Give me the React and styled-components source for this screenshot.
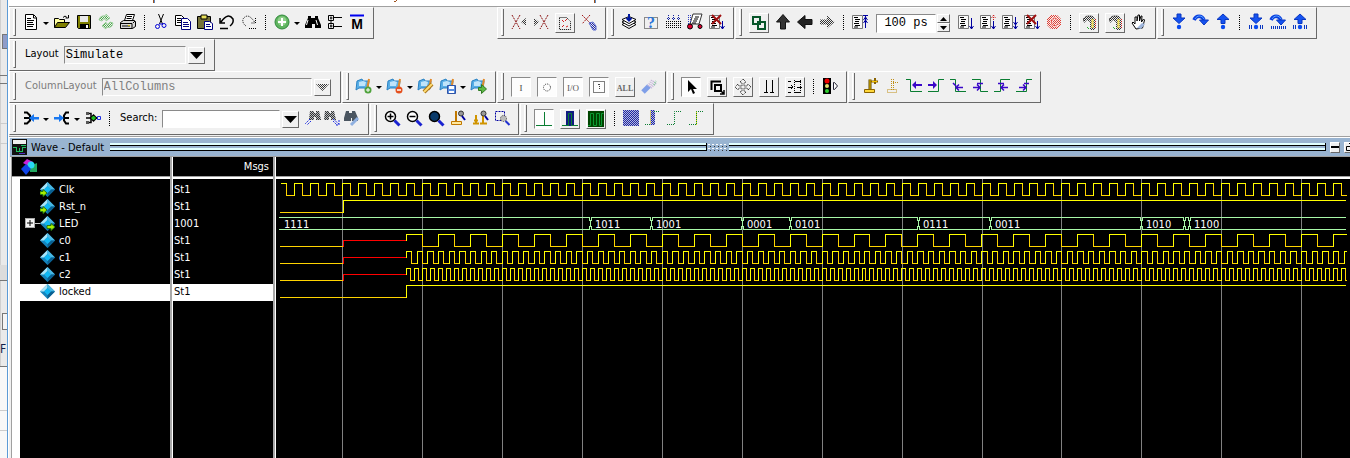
import React, { useState } from 'react';
import styled, { createGlobalStyle, css } from 'styled-components';

const GlobalStyle = createGlobalStyle`
  * {
    box-sizing: border-box;
  }
  body {
    margin: 0;
    overflow: hidden;
    background: #f0f0f0;
    color: #000;
    font-family: 'DejaVu Sans Condensed', 'DejaVu Sans', sans-serif;
    font-size: 11px;
  }
`;

const Page = styled.div`
  display: flex;
  height: 100vh;
`;

// The sliver of the window behind this one
const Behind = styled.aside`
  flex: 0 0 8px;
  display: flex;
  flex-direction: column;
  overflow: hidden;
  background: linear-gradient(90deg, #d0d0d0 0 1px, #eaeaea 1px 7px, #5c9bd6 7px);
`;

const BehindPart = styled.div`
  flex: 0 0 ${(p) => p.$h}px;
  width: 7px;
  overflow: hidden;
  line-height: 16px;
  font-size: 12px;
  color: #10204a;
  background: ${(p) => p.$bg || 'transparent'};
  border-bottom: 1px solid ${(p) => p.$line || 'transparent'};
`;

const BehindField = styled(BehindPart)`
  width: 5px;
  margin-left: 2px;
  border: 1px solid #777;
  border-right: 0;
`;

const Main = styled.main`
  flex: 1;
  min-width: 0;
  display: flex;
  flex-direction: column;
  border-left: 1px solid #fff;
`;

const TopEdge = styled.div`
  flex: 0 0 7px;
  display: flex;
  background: #fff;
  border-bottom: 1px solid #a0a0a0;
`;

const Toolbars = styled.div`
  padding-bottom: 1px;
  border-bottom: 1px solid #a0a0a0;
`;

const ToolRow = styled.div`
  display: flex;
  gap: 1px;
  height: 32px;
`;

const Spacer = styled.div`
  flex: 0 0 121px;
`;

const Group = styled.div`
  display: flex;
  align-items: center;
  flex: none;
  padding-right: 5px;
  border: 1px solid #fff;
  border-right-color: #696969;
  border-bottom-color: #696969;

  &::before {
    content: '';
    align-self: stretch;
    width: 1px;
    margin: 1px 4px 2px 3px;
    border-left: 1px solid #fff;
    border-right: 1px solid #696969;
    border-bottom: 1px solid #696969;
  }
`;

const ToolButton = styled.button`
  display: flex;
  align-items: center;
  justify-content: center;
  width: ${(p) => (p.$narrow ? 19 : 22)}px;
  height: 22px;
  padding: 0 0 2px;
  border: 0;
  background: none;

  ${(p) =>
    p.$boxed &&
    css`
      width: 20px;
      height: 20px;
      margin: 0 3px;
      padding: 0;
      border: 1px solid #fff;
      border-right-color: #696969;
      border-bottom-color: #696969;
    `}

  ${(p) =>
    p.$pressed &&
    css`
      background: #fdfdfd;
      border-color: #8a8a8a #fff #fff #8a8a8a;
    `}
`;

const IconSvg = styled.svg`
  flex: none;
  overflow: visible;
`;

const MenuArrow = styled.button`
  width: 9px;
  height: 22px;
  padding: 0;
  border: 0;
  background: none;

  &::after {
    content: '';
    display: block;
    width: 0;
    margin: 0 1px;
    border: 3px solid transparent;
    border-top-color: #000;
    border-bottom: 0;
  }
`;

const Divider = styled.span`
  height: 15px;
  margin: 0 5px 2px;
  border-left: 1px dotted #000;
`;

const FieldLabel = styled.label`
  padding: 0 5px 3px;
  color: ${(p) => (p.$dim ? '#7c7c7c' : '#000')};
`;

const fieldLook = css`
  height: 18px;
  padding: 0 1px;
  border: 1px solid #fff;
  border-top-color: #8a8a8a;
  border-left-color: #8a8a8a;
  border-radius: 0;
  outline: 0;
  font-family: 'Liberation Mono', monospace;
  font-size: 12px;
`;

const LayoutSelect = styled.select`
  ${fieldLook}
  appearance: none;
  width: ${(p) => (p.$wide ? 210 : 122)}px;
  background: #f0f0f0;
  color: #000;
  opacity: 1;

  &:disabled {
    color: #808080;
  }
`;

const SearchInput = styled.input`
  ${fieldLook}
  width: 118px;
  background: #fff;
`;

const TimeInput = styled.input`
  ${fieldLook}
  width: 60px;
  height: 19px;
  margin-left: 5px;
  text-align: center;
  background: #fff;
`;

const Spinner = styled.div`
  display: flex;
  flex-direction: column;
  margin: 0 5px 0 1px;
`;

const SpinButton = styled.button`
  display: flex;
  align-items: center;
  justify-content: center;
  width: 13px;
  height: 9px;
  padding: 0;
  background: #f0f0f0;
  border: 1px solid #fff;
  border-right-color: #696969;
  border-bottom-color: #696969;
`;

const DropButton = styled.button`
  display: flex;
  align-items: center;
  justify-content: center;
  width: 17px;
  height: 17px;
  margin: 0 4px 0 2px;
  padding: 0;
  background: #f0f0f0;
  border: 1px solid #fff;
  border-right-color: #696969;
  border-bottom-color: #696969;
`;

const WaveWindow = styled.section`
  flex: 1;
  min-height: 0;
  display: flex;
  flex-direction: column;
  padding-left: 1px;
  border-top: 1px solid #fff;
`;

const TitleBar = styled.header`
  flex: 0 0 19px;
  display: flex;
  align-items: center;
  padding-left: 2px;
  overflow: hidden;
  background: #99b4d1;
  border-bottom: 1px solid #a0a0a0;
`;

const Title = styled.h1`
  margin: 0 6px 0 4px;
  font-size: 11px;
  font-weight: normal;
  white-space: nowrap;
`;

const Grooves = styled.div`
  flex: 1;
  height: 8px;
  border: solid #000;
  border-width: 0 1px 1px 0;
  background: linear-gradient(#e0ffff 0 2px, #000 2px 3px, transparent 3px 5px, #e0ffff 5px 7px);
`;

const Grip = styled.svg`
  flex: none;
  margin: 0 1px;
`;

const WindowButton = styled.button`
  flex: none;
  display: flex;
  align-items: center;
  justify-content: center;
  width: 10px;
  height: 11px;
  margin-left: 4px;
  padding: 0;
  background: #f0f0f0;
  border: 1px solid #fff;
  border-right-color: #696969;
  border-bottom-color: #696969;

  &:last-child {
    margin-right: -4px;
  }
`;

const Panes = styled.div`
  flex: 1;
  min-height: 0;
  display: flex;
  margin-left: 1px;
  background: #fff;
  border-left: 1px solid #a0a0a0;
`;

const Pane = styled.div`
  flex: 0 0 ${(p) => p.$w}px;
  display: flex;
  flex-direction: column;
  padding-right: 2px;
  background: #a8a8a8;
  border-right: 1px solid #fff;
`;

const WavePane = styled.div`
  flex: 1;
  min-width: 0;
  display: flex;
  flex-direction: column;
`;

const PaneHead = styled.div`
  flex: 0 0 20px;
  display: flex;
  align-items: center;
  justify-content: ${(p) => (p.$right ? 'flex-end' : 'flex-start')};
  padding: 0 4px 0 8px;
  background: #000;
  color: #fff;
  border-bottom: 1px solid #a0a0a0;
`;

const PaneBody = styled.ul`
  flex: 1;
  margin: 0;
  padding: 3px 0 0;
  list-style: none;
  background: #000;
  border: solid #fff;
  border-width: 2px 0 0 ${(p) => (p.$gutter ? 8 : 0)}px;
`;

const SignalRow = styled.li`
  display: flex;
  align-items: center;
  height: 17px;
  padding: 0 0 3px ${(p) => (p.$value ? 1 : 5)}px;
  white-space: pre;
  color: ${(p) => (p.$selected ? '#000' : '#fff')};
  background: ${(p) => (p.$selected ? '#fff' : '#000')};
`;

const Expander = styled.button`
  display: flex;
  width: 10px;
  height: 10px;
  padding: 0;
  background: #f4f4f4;
  border: 1px solid #aaa;
`;

const Branch = styled.span`
  flex: 0 0 ${(p) => (p.$line ? 5 : 15)}px;
  border-top: ${(p) => (p.$line ? '1px solid #ccc' : '0')};
`;

const SignalName = styled.span`
  padding-left: 4px;
`;

const WaveArea = styled.div`
  flex: 1;
  min-height: 0;
  margin-top: 2px;
  overflow: hidden;
  background: #000;
`;

const WaveSvg = styled.svg`
  display: block;
  width: 100%;
  height: 100%;
`;

/* ---------- icons ---------- */

const S = ({ d, c = '#000', w = 1, dash }) => (
  <path d={d} fill="none" stroke={c} strokeWidth={w} strokeDasharray={dash} />
);
const F = ({ d, c = '#000', s }) => <path d={d} fill={c} stroke={s} />;
const T = ({ children, x = 8, y = 12, size = 9, c = '#000', weight, family = 'Liberation Serif, serif' }) => (
  <text x={x} y={y} fontSize={size} fill={c} fontWeight={weight} textAnchor="middle" fontFamily={family}>
    {children}
  </text>
);

const GREEN = '#0a7d32';
const NAVY = '#0000a0';
const VIOLET = '#3a08c8';

const textPage = (
  <>
    <F d="M.5 1.5h10v13h-10z" c="#f8f8f8" s="#777" />
    <S d="M2 3.5h4M3 5.5h5M3 7.5h4M2 9.5h5M3 11.5h5M2 13h4" w={1} />
  </>
);
const redX = <S d="M3 1l9 9M12 1l-9 9" c="#a01010" w={2} />;
const banner = (
  <>
    <F d="M1 3l5-2 1 2h6l-1 8-4-1H3L0 12z" c="#58aee6" s="#2a82c4" />
    <F d="M3 4l4-1 3 1-1 4H3z" c="#bfe4fa" />
    <S d="M13 1l-2 11" c="#e08a2c" w={2} />
  </>
);
const pin = (
  <>
    <S d="M8 1.5v10" c="#5a4600" w={3} />
    <S d="M8 1.5v10" c="#f5c400" w={1} />
    <F d="M2.5 11.5h10v3h-10z" c="#ffd83a" s="#8a6200" />
  </>
);
const lens = (fill) => (
  <>
    <circle cx="6.500" cy="6.500" r="5" fill={fill} stroke="#000" strokeWidth="1.500" />
    <S d="M10.500 10.500l5 5" c="#1a22d0" w={3} />
  </>
);
const binoculars = (fill) => (
  <>
    <F d="M3 2h3v2h4V2h3v2l3 7v3h-6v-4H7v4H0v-3l3-7z" c={fill} />
    <S d="M3 6l-1.500 5M11 6l1.500 5" c="#fff" />
  </>
);
const blueDown = <F d="M6 0h4v4h4L8 9.500 2 4h4z" c="#1553f0" s="#0a37c0" />;
const blueUp = <F d="M6 9.500h4v-4h4L8 0 2 5.500h4z" c="#1553f0" s="#0a37c0" />;
const blueOver = (
  <>
    <path d="M1 6c2-5 8-5 10 0" fill="none" stroke="#0a3ee0" strokeWidth="3.500" />
    <path d="M2 5c2-4 7-4 9 0" fill="none" stroke="#5aa8ff" strokeWidth="1" />
    <F d="M6.500 6h9L11 11z" c="#1553f0" s="#0a37c0" />
  </>
);
const processBars = <S d="M1.500 11v4M3.500 11v4M12.500 11v4M14.500 11v4" c="#0a37c0" />;
const dot = <circle cx="8" cy="13" r="2.200" fill="#0a4bf0" />;
const hatchPage = (
  <>
    <F d="M2 4l4-3h6l2 3v11H9V7L6 5 3 8z" c="url(#stipple)" />
    <S d="M3 6V3l3-2h5" dash="1 1" />
    <S d="M11.500 4v9" c="#f0e060" w={2} />
    <S d="M14.500 4v10" c="#d02020" dash="1 1" />
    <S d="M6 12l2 2" c="#2ab030" />
  </>
);
const dashedPage = <S d="M2.500 2.500h7l4 4v8h-11z" dash="1 1" />;

const icons = {
  file: (
    <>
      <F d="M2.500 .5h8l3 3v12h-11z" c="#fff" s="#000" />
      <S d="M10.500 1v3h3M4 4.500h4M4 6.500h7M4 8.500h6M4 10.500h7M4 12.500h6" />
    </>
  ),
  open: (
    <>
      <F d="M.5 13.500v-9h4l1 1h5v3" c="#ffffa0" s="#000" />
      <F d="M.5 13.500l3-5h12l-4 5z" c="#808000" s="#000" />
      <S d="M9 3.500q2-3 4 0M14.500 1v3h-3" />
    </>
  ),
  save: (
    <>
      <F d="M1.500 1.500h13v13h-12l-1-1z" c="#808000" s="#000" />
      <F d="M4 2h8v6H4z" c="#e8e8e8" />
      <F d="M4 10h9v5H4z" />
      <F d="M10 11h2v3h-2z" c="#fff" />
    </>
  ),
  reload: (
    <>
      <F d="M1 6q1-5 7-4V0l4 4-4 3V5Q5 4 4 7z" c="url(#stippleGreen)" s="#9ccf9c" />
      <F d="M15 9q-1 6-7 4v2l-4-3 4-4v2q3 1 4-2z" c="url(#stippleGreen)" s="#9ccf9c" />
    </>
  ),
  print: (
    <>
      <F d="M4.500 6.500l2-6h8l-2 6" c="#fff" s="#000" />
      <S d="M7 2.500h5M6.500 4.500h5" />
      <F d="M.5 8.500l3-2h11l1 1v5l-3 2H.5z" c="#d8d8d8" s="#000" />
      <S d="M1 9.500h11v5M2 12h8M13 9l2-2" />
      <S d="M8 11.500h2" c="#c8b800" />
    </>
  ),
  cut: (
    <>
      <S d="M5.500 0l4 10M10.500 0l-4 10" />
      <circle cx="4.500" cy="12.500" r="2" fill="none" stroke="#0000d8" />
      <circle cx="11" cy="11.500" r="2" fill="none" stroke="#0000d8" />
      <S d="M6 10h4" c="#0000d8" />
    </>
  ),
  copy: (
    <>
      <F d="M.5 1.500h6l3 3v7h-9z" c="#fff" s="#000" />
      <S d="M2 4.500h4M2 6.500h5M2 8.500h5" />
      <F d="M6.500 4.500h6l3 3v8h-9z" c="#fff" s="#000080" />
      <S d="M8 8.500h5M8 10.500h6M8 12.500h6" c="#000080" />
    </>
  ),
  paste: (
    <>
      <F d="M.5 2.500h13v12H.5z" c="#77733a" s="#000" />
      <F d="M4 1h6v4H4z" c="#e8e05a" s="#000" />
      <F d="M7.500 7.500h5l3 2v6h-8z" c="#fff" s="#000080" />
      <S d="M9 10.500h4M9 12.500h5" c="#000080" />
    </>
  ),
  undo: <S d="M1 4v5h5M2 8q7-10 12-3 1 4-3 7M1 14.500h8" w={1.5} />,
  redo: <S d="M14.500 4v5h-5M13.500 8Q7-2 2 5q-1 4 3 7M8 14.500h7" dash="1 1" />,
  add: (
    <>
      <circle cx="8" cy="8" r="7" fill="#5fb35f" stroke="#2f8a3a" />
      <circle cx="8" cy="7" r="4.500" fill="#8fd08a" />
      <S d="M8 4v8M4 8h8" c="#fff" w={2} />
    </>
  ),
  find: binoculars('#000'),
  tree: (
    <S d="M1.500 1.500h5v5h-5zM1.500 9.500h5v5h-5zM4 2.500v3M3 4h2.500M4 10.500v3M3 12h2.500M7 3.500h8M7 12.500h8M4 7v2" />
  ),
  modelM: (
    <>
      <S d="M1 1.500h14" c="#0000f0" w={2} />
      <T y={15} size={14} weight="bold" family="Liberation Sans, sans-serif">M</T>
    </>
  ),
  xLeft: (
    <>
      <S d="M1 1l8 14M9 1L1 15" c="#8a1010" dash="2 1" />
      <F d="M15 4v8l-5-4z" c="url(#stipple)" />
    </>
  ),
  xRight: (
    <>
      <S d="M7 1l8 14M15 1L7 15" c="#8a1010" dash="2 1" />
      <F d="M1 4v8l5-4z" c="url(#stipple)" />
    </>
  ),
  coverPage: (
    <>
      {dashedPage}
      <S d="M5 5l2 2M8 6l2-2M5 12l2-2M9 12l2-1" c="#d02020" />
    </>
  ),
  xBrush: (
    <>
      <S d="M1 1l9 9M9 1L1 10" c="#a01818" dash="2 1" />
      <F d="M8 9l4-1 3 4v4h-3z" c="url(#stippleBlue)" s="#5a6ad0" />
    </>
  ),
  stack: (
    <>
      <F d="M1 10.500l7-4 7 4-7 4z" c="#fff" s="#000" />
      <F d="M1 8l7-4 7 4-7 4z" c="#fff" s="#000" />
      <F d="M1 5.500l7-3 7 3-7 4z" c="#fff" s="#000" />
      <S d="M8 0v6M5.500 4L8 6.500 10.500 4" c="#0018a0" w={2} />
    </>
  ),
  question: (
    <>
      <S d="M1.500 3.500h13v11h-13z" c="#222" dash="1 1" />
      <T y={14} size={16} weight="bold" c="#2a74d8">?</T>
    </>
  ),
  grid: (
    <>
      <S d="M1 9.500h15M1 11.500h15M1 13.500h15M1 7.500h15" dash="1 1" />
      <S d="M3.500 1v5M8.500 1v5M13.500 1v5M2 4.500h3M7 4.500h3M12 4.500h3" c="#1020a0" dash="1 1" />
    </>
  ),
  cart: (
    <>
      <F d="M6 0h9l-3 10H3z" c="#fff" s="#333" />
      <S d="M8 3h4M7 5h4M6 7h4M5 9h4" />
      <S d="M1.500 1v9M3.500 1v8" c="#3040c0" dash="1 1" />
      <circle cx="3" cy="12.500" r="2.500" fill="#e00030" stroke="#000" />
      <circle cx="13" cy="12.500" r="2" fill="#e00030" stroke="#000" />
    </>
  ),
  pageX: (
    <>
      {textPage}
      <S d="M13.500 7v8M11.500 12l2 3 2-3" c={NAVY} />
      {redX}
    </>
  ),
  link: <S d="M2 2h7v7H2zM7 7h7v7H7z" c="#07562a" w={2} />,
  up: <F d="M5.500 15V8h-4L8 .5 14.500 8h-4v7z" c="#333" s="#111" />,
  left: <F d="M15 5.500H8v-4L.5 8 8 14.500v-4h7z" c="#222" s="#111" />,
  rightDim: <F d="M1 5.500h7v-4L15.500 8 8 14.500v-4H1z" c="url(#stipple)" />,
  pageUp: (
    <>
      {textPage}
      <S d="M13.500 2v12M11 1.500h5M11.500 6l2-3 2 3M11.500 9l2-3 2 3" c={NAVY} />
    </>
  ),
  pageDown: (
    <>
      {textPage}
      <S d="M13.500 4v11M11.500 12l2 3 2-3" c={NAVY} />
    </>
  ),
  pageBoth: (
    <>
      {textPage}
      <S d="M13.500 7v8M11.500 12l2 3 2-3" c={NAVY} />
      <S d="M13.500 1v6M11.500 4l2-3 2 3" c="#d02020" dash="1 1" />
    </>
  ),
  pageDouble: (
    <>
      {textPage}
      <S d="M13.500 3v12M11.500 8l2 3 2-3M11.500 12l2 3 2-3" c={NAVY} />
    </>
  ),
  stop: (
    <>
      <F d="M5 1h6l4 4v6l-4 4H5l-4-4V5z" c="url(#stippleRed)" />
      <S d="M12 6Q8 2 5.500 6q-1 3 1 5 3 2 5.500-1" c="#fff" w={2} />
      <S d="M12 6Q8 2 5.500 6q-1 3 1 5 3 2 5.500-1" c="#e23a30" />
    </>
  ),
  hatchPage,
  hand: (
    <>
      <F d="M5 15l-4-6 1-1 2 2V3h2v4l1-6h1.500v6l1.500-5h1l-.5 6 2-3 1 1-2 8z" c="#fff" s="#000" />
      <F d="M6 14l5-5 3 1-4 5z" c="#9fb6dc" />
    </>
  ),
  stepIn: <>{blueDown}{dot}</>,
  stepOver: blueOver,
  stepOut: <>{blueUp}{dot}</>,
  stepInP: <>{blueDown}{dot}{processBars}</>,
  stepOverP: (
    <>
      {blueOver}
      <S d="M1 13.500h15" c="#0a37c0" w={3} dash="1 1" />
    </>
  ),
  stepOutP: <>{blueUp}{dot}{processBars}</>,
  flagAdd: (
    <>
      {banner}
      <circle cx="12" cy="12" r="3.500" fill="#4fa33c" />
      <S d="M12 10v4M10 12h4" c="#fff" />
    </>
  ),
  flagDel: (
    <>
      {banner}
      <circle cx="12" cy="12" r="3.500" fill="#e4501e" />
      <S d="M10 12h4" c="#fff" w={1.5} />
    </>
  ),
  flagEdit: (
    <>
      {banner}
      <S d="M6 14l8-8" c="#a8741c" w={4} />
      <S d="M6 14l8-8" c="#ffdc6e" w={2} />
    </>
  ),
  flagSave: (
    <>
      {banner}
      <F d="M7.500 7.500h8v8h-8z" c="#5b8fe0" s="#2f55a8" />
      <F d="M9 8h5v3H9zM9 13h5v2H9z" c="#fff" />
    </>
  ),
  flagGo: (
    <>
      {banner}
      <F d="M7.500 9.500h3v-3l5 4.500-5 4.500v-3h-3z" c="#5fb944" s="#2f7a22" />
    </>
  ),
  fI: <T c="#444">I</T>,
  fO: <circle cx="8" cy="8.500" r="3.500" fill="none" stroke="#333" strokeDasharray="1 1" />,
  fIO: <T size={9} c="#555">I/O</T>,
  fBox: (
    <>
      <S d="M2.500 2.500h11v11h-11z" dash="1 1" />
      <S d="M8.500 5v6M7 5.500h2" c="#444" dash="1 1" />
    </>
  ),
  fAll: <T size={8} weight="bold" c="#666">ALL</T>,
  brush: (
    <>
      <S d="M2 14l6-6" c="#7f9fe8" w={5} />
      <S d="M7 8l4-6M9 9l4-6M10 10l5-5" c="#c8b8dc" w={2} dash="1 1" />
      <S d="M13 7l2-4" c="#88c8a0" w={2} dash="1 1" />
    </>
  ),
  cursor: <F d="M5 1v12l3-3 2 5 2-1-2-4h4z" />,
  region: (
    <>
      <S d="M2.500 11V2.500H12" w={2} />
      <S d="M6 6h6v6H6z" w={2} />
      <S d="M11 11l4 4M15 11v4h-4" w={1.5} />
    </>
  ),
  pan: <S d="M8 0l3 3-2 1v3h3l1-2 3 3-3 3-1-2H9v3l2 1-3 3-3-3 2-1V9H4l-1 2-3-3 3-3 1 2h3V4L5 3z" dash="1 1" />,
  bars: <S d="M5.500 1v12M11.500 1v12M3 13.500h4M9 13.500h4" />,
  ranges: (
    <>
      <S d="M1 2.500h3M1 8.500h4M1 13.500h3M4 6l2 2-2 2M8 2.500h6M8 13.500h6M10 8.500h5" />
      <S d="M7.500 1v14M13.500 1v14" dash="1 1" />
    </>
  ),
  light: (
    <>
      <F d="M1 0h8v16H1z" />
      <circle cx="5" cy="3" r="2.500" fill="#f00000" />
      <circle cx="5" cy="8" r="2" fill="#e8e070" />
      <circle cx="5" cy="13" r="2" fill="#30d030" />
      <F d="M11.500 4.500h1l3 3.500-3 3.500h-1z" c="#fff" s="#223" />
    </>
  ),
  pinAdd: (
    <>
      {pin}
      <S d="M9 3.500h7M13 0v6" c="#8a6200" w={2} />
      <S d="M10 3.500h5" c="#f5c400" />
    </>
  ),
  pinDim: <S d="M7.500 1v11M9.500 1v11M3.500 11.500h9v3h-9zM9 4.500h6" c="#c09018" dash="1 1" />,
  edgeL: (
    <>
      <S d="M0 1.500h4.500v12H16" c={GREEN} />
      <F d="M6 7l4-4v3h6v2h-6v3z" c={VIOLET} />
    </>
  ),
  edgeR: (
    <>
      <S d="M0 13.500h10.500v-12H16" c={GREEN} />
      <F d="M9 7L5 3v3H0v2h5v3z" c={VIOLET} />
    </>
  ),
  fallL: (
    <>
      <S d="M0 1.500h5.500v12H16" c={GREEN} />
      <S d="M6 9.500h7M9 6.500l-3 3 3 3M3 5l3 3" c={VIOLET} w={1.5} />
    </>
  ),
  fallR: (
    <>
      <S d="M0 1.500h8.500v12H16" c={GREEN} />
      <S d="M1 9.500h7M5 6.500l3 3-3 3M5 5.500h6" c={VIOLET} w={1.5} />
    </>
  ),
  riseL: (
    <>
      <S d="M0 13.500h6.500v-12H16" c={GREEN} />
      <S d="M7 9.500h7M10 6.500l-3 3 3 3M4 5.500h6" c={VIOLET} w={1.5} />
    </>
  ),
  riseR: (
    <>
      <S d="M0 13.500h10.500v-12H16" c={GREEN} />
      <S d="M3 9.500h7M7 6.500l3 3-3 3M8 5.500h5" c={VIOLET} w={1.5} />
    </>
  ),
  mergeIn: (
    <>
      <S d="M1 2.500h3l3 3v5l-3 3H1M1 8h5" w={2} />
      <F d="M6 8l5-4v3h5v2.500h-5V12z" c="#1a78f0" />
    </>
  ),
  mergeOut: (
    <>
      <S d="M15 2.500h-3l-2 3v5l2 3h3M15 8h-5" w={2} />
      <F d="M10 8L5 4v3H0v2.500h5V12z" c="#1a78f0" />
    </>
  ),
  net: (
    <>
      <S d="M1 3.500h5v9H1M1 8h12" w={1.5} />
      <F d="M1 2h3v3H1zM1 11h3v3H1z" c="#555" />
      <F d="M8.500 4l4 4-4 4-4-4z" c="#000" />
      <S d="M8.500 6v4M6.500 8h4" c="#20c020" w={2} />
      <S d="M12.500 6.500h3v3h-3z" c="#2030e0" />
    </>
  ),
  findPrev: (
    <>
      <F d="M5 1h4v2h2V1h3l2 9h-5V7H9v3H4z" c="#b8bcc0" />
      <F d="M5 1h4v2h2V1h3l2 9h-5V7H9v3H4z" c="url(#stipple)" />
      <S d="M5 9l-5 5M6 11l-4 4" c="#2030e0" dash="2 1" />
    </>
  ),
  findNext: (
    <>
      <F d="M1 1h4v2h2V1h3l2 9H7V7H5v3H0z" c="#b8bcc0" />
      <F d="M1 1h4v2h2V1h3l2 9H7V7H5v3H0z" c="url(#stipple)" />
      <S d="M9 9l6 5M9 11l4 4M15 10v5h-4" c="#2030e0" dash="2 1" />
    </>
  ),
  findOpts: (
    <>
      <F d="M2 1h3v2h3V1h3l3 7v3H8V8H7v3H0V8z" c="#4a5560" />
      <S d="M7 15l7-7" c="#8fb0e0" w={3} />
    </>
  ),
  zoomIn: <>{lens('#fff')}<S d="M6.500 3.500v6M3.500 6.500h6" w={1.5} /></>,
  zoomOut: <>{lens('#fff')}<S d="M3.500 6.500h6" w={1.5} /></>,
  zoomFull: lens('#0a3a6a'),
  zoomPin: (
    <>
      <S d="M6 1v10" c="#c07800" w={2} />
      <F d="M1.500 11.500h10v3h-10z" c="#ffe9a0" s="#c07800" />
      <circle cx="11" cy="3.500" r="2.500" fill="#999" stroke="#333" />
      <S d="M12 6l3 4" c={NAVY} w={2} />
    </>
  ),
  zoomPins: (
    <>
      <S d="M4 5v8M1 13.500h6M11 5v8M8 13.500h7M2 10.500h4" c="#d09400" w={2} />
      <circle cx="11.500" cy="3.500" r="2.500" fill="#999" stroke="#333" />
      <S d="M13 6l3 4" c={NAVY} w={2} />
    </>
  ),
  zoomArea: (
    <>
      <S d="M1.500 1.500h9v9h-9z" c={NAVY} dash="2 1" />
      <circle cx="9.500" cy="8.500" r="3" fill="#bbb" stroke="#444" strokeDasharray="1 1" />
      <S d="M11.500 11l4 4" c="#2030d0" w={2} />
    </>
  ),
  line1: <S d="M0 14.500h16M8.500 1v13" c={GREEN} />,
  bar1: (
    <>
      <F d="M4 0h8v15H4z" c="#101a80" />
      <S d="M0 14.500h6.500v-12h3v12H16" c={GREEN} />
    </>
  ),
  bar2: (
    <>
      <F d="M0 0h16v16H0z" c="#004400" />
      <S d="M0 14.500h2.500v-12h3v12h3v-12h3v12h2v-12h2" c="#0a9a32" />
    </>
  ),
  fillBlue: (
    <>
      <F d="M0 0h16v16H0z" c="#b4b8e0" />
      <F d="M0 0h16v16H0z" c="url(#stippleBlue)" />
    </>
  ),
  edgeFill: (
    <>
      <F d="M5 0h5v15H5z" c="#b4b8e0" />
      <F d="M5 0h5v15H5z" c="url(#stippleBlue)" />
      <S d="M5.500 1v13" c="#e8d020" dash="1 1" />
      <S d="M0 14.500h6M9 1.500h6" c={GREEN} dash="1 1" />
    </>
  ),
  edgeDots: <S d="M0 14.500h7.500v-13H15" c={GREEN} dash="1 1" />,
  edgeYellow: (
    <>
      <S d="M7.500 1v14" c="#e8e020" />
      <S d="M0 14.500h7.500v-13H15" c={GREEN} dash="1 1" />
    </>
  ),
};

const Icon = ({ name }) => (
  <IconSvg width="16" height="16" viewBox="0 0 16 16" aria-hidden="true">
    {icons[name]}
  </IconSvg>
);

const Tool = ({ icon, boxed, pressed, narrow }) => (
  <ToolButton type="button" aria-label={icon} $boxed={boxed} $pressed={pressed} $narrow={narrow}>
    <Icon name={icon} />
  </ToolButton>
);

// "|" is a divider, "v" a menu arrow, "[x]" a boxed button, "(x)" a pressed one
const Tools = ({ list }) =>
  list.split(' ').map((item, i) => {
    if (item === '|') return <Divider key={i} />;
    if (item === 'v') return <MenuArrow key={i} type="button" aria-label="menu" />;
    const boxed = /^[[(]/.test(item);
    return (
      <Tool key={i} icon={item.replace(/[^\w]/g, '')} boxed={boxed} pressed={item[0] === '('} />
    );
  });

const Drop = ({ dim, label }) => (
  <DropButton type="button" aria-label={label} disabled={dim}>
    <svg width="13" height="7" viewBox="0 0 13 7">
      <path d="M0 0h13L6.500 7z" fill={dim ? 'url(#stipple)' : '#000'} />
    </svg>
  </DropButton>
);

/* ---------- signals ---------- */

const signals = [
  { name: 'Clk', value: 'St1', port: 'in' },
  { name: 'Rst_n', value: 'St1', port: 'in' },
  { name: 'LED', value: '1001', port: 'out', bus: true },
  { name: 'c0', value: 'St1' },
  { name: 'c1', value: 'St1' },
  { name: 'c2', value: 'St1' },
  { name: 'locked', value: 'St1', selected: true },
];

const Diamond = ({ port }) => (
  <svg width="15" height="15" viewBox="0 0 15 15" aria-hidden="true">
    <path d="M7.500 0L15 7.500 7.500 15 0 7.500z" fill="#1584bd" />
    <path d="M7.500 0v4L4 7.500H0z" fill="#a8e4f8" />
    <path d="M7.500 0L15 7.500h-4L7.500 4z" fill="#49b8e4" />
    <path d="M15 7.500L7.500 15v-4L11 7.500z" fill="#0a5f90" />
    <path d="M7.500 4L11 7.500 7.500 11 4 7.500z" fill="#10b8f4" />
    {port === 'in' && <path d="M0 9.500h3V7.500l4 3.500-4 3.500v-2H0z" fill="#a8f000" stroke="#267a10" />}
    {port === 'out' && <path d="M7 9.500h4V7.500l4 3.500-4 3.500v-2H7z" fill="#a8f000" stroke="#267a10" />}
  </svg>
);

// Wave coordinates are relative to the wave pane
const START = 4;
const END = 1070;
const LOCK = 130.4;
const GRID = 79.93;
const GRID_START = 66.6;

const px = (v) => Math.floor(v) + 0.5;

// Splits a clock into the bright (high) strokes and the darker (low) ones
const clockPaths = (from, period, top, riseAt) => {
  let high = '';
  let low = '';
  for (let k = Math.floor((from - riseAt) / period); riseAt + k * period < END; k++) {
    const rise = riseAt + k * period;
    const fall = rise + period / 2;
    const next = rise + period;
    if (fall > from) {
      high += `M${px(Math.max(rise, from))} ${top + 0.5}H${px(Math.min(fall, END))}`;
      if (rise > from) high += `M${px(rise)} ${top + 12.5}V${top}`;
    }
    if (fall < END && next > from) {
      low += `M${px(Math.max(fall, from))} ${top}V${top + 12.5}H${px(Math.min(next, END))}`;
    }
  }
  return { high, low };
};

const Clock = ({ from, period, top, riseAt }) => {
  const { high, low } = clockPaths(from, period, top, riseAt);
  return (
    <>
      <S d={low} c="#ffd400" />
      <S d={high} c="#ffff00" />
    </>
  );
};

// Unknown until the PLL locks, then a running clock
const PllClock = ({ period, top, riseAt }) => (
  <>
    <S d={`M${START} ${top + 12.5}H67`} c="#ffd400" />
    <S d={`M67.500 ${top + 13}V${top + 6.5}H${LOCK}`} c="#ff0000" />
    <S d={`M${px(LOCK)} ${top + 7}V${top}`} c="#ffff00" />
    <Clock from={LOCK} period={period} top={top} riseAt={riseAt} />
  </>
);

const ledValues = [
  [3, '1111'],
  [314, '1011'],
  [375, '1001'],
  [466, '0001'],
  [514, '0101'],
  [642, '0111'],
  [714, '0011'],
  [865, '1010'],
  [908, ''],
  [913, '1100'],
];

const LedBus = ({ top }) => (
  <>
    {ledValues.map(([x, label], i) => {
      const begin = i > 0 ? x + 2 : x;
      const end = i + 1 < ledValues.length ? ledValues[i + 1][0] - 1 : END;
      return (
        <g key={x}>
          <S d={`M${begin} ${top + 0.5}H${end}M${begin} ${top + 12.5}H${end}`} c="#a8f8a8" />
          {i > 0 && (
            <S
              d={`M${x - 1}.5 ${top}v3l1 1v5l-1 1v3M${x + 1}.5 ${top}v3l-1 1v5l1 1v3`}
              c="#a8f8a8"
            />
          )}
          <text x={x + 5} y={top + 11} fill="#fff" fontSize="11">
            {label}
          </text>
        </g>
      );
    })}
  </>
);

const Stipple = ({ id, color }) => (
  <pattern id={id} width="2" height="2" patternUnits="userSpaceOnUse">
    <rect width="1" height="1" fill={color} />
    <rect x="1" y="1" width="1" height="1" fill={color} />
  </pattern>
);

const Waves = () => (
  <WaveSvg shapeRendering="crispEdges" role="img" aria-label="Waveforms">
    <defs>
      <Stipple id="stipple" color="#333" />
      <Stipple id="stippleGreen" color="#4aa84a" />
      <Stipple id="stippleRed" color="#e23a30" />
      <Stipple id="stippleBlue" color="#2028a0" />
    </defs>
    {Array.from({ length: 13 }, (_, k) => {
      const x = px(GRID_START + GRID * k);
      return <line key={k} x1={x} x2={x} y1="0" y2="100%" stroke="#808080" />;
    })}
    <Clock from={START} period={GRID / 5} top={4} riseAt={GRID_START} />
    <S d={`M${START} 33.500H67.500`} c="#ffd400" />
    <S d={`M67.500 34V21.500H${END}`} c="#ffff00" />
    <LedBus top={38} />
    <PllClock period={GRID / 2.5} top={55} riseAt={LOCK} />
    <PllClock period={GRID / 7.5} top={72} riseAt={LOCK} />
    <PllClock period={GRID / 10} top={89} riseAt={LOCK} />
    <S d={`M${START} 118.500H${LOCK}`} c="#ffd400" />
    <S d={`M${px(LOCK)} 119V106.500H${END}`} c="#ffff00" />
  </WaveSvg>
);

const App = () => {
  const [runLength, setRunLength] = useState('100 ps');
  const [search, setSearch] = useState('');

  return (
    <Page>
      <GlobalStyle />
      <Behind>
        <BehindPart $h={34} />
        <BehindField $h={15} $bg="#8f9cc8" />
        <BehindPart $h={27} $line="#777" />
        <BehindPart $h={8} $line="#777" />
        <BehindPart $h={40} $line="#ccc" />
        <BehindPart $h={20} $line="#ccc" />
        <BehindPart $h={121} />
        <BehindPart $h={16} $bg="#dcdcdc" $line="#777" />
        <BehindPart $h={32} />
        <BehindField $h={17} $bg="#f4f4f4" />
        <BehindPart $h={11} />
        <BehindPart $h={26} $line="#777">F</BehindPart>
        <BehindPart $h={44} $bg="#f8f8f8" $line="#ccc" />
        <BehindPart $h={20} $bg="#f8f8f8" $line="#ccc" />
        <BehindPart $h={27} $bg="#f8f8f8" />
      </Behind>
      <Main>
        <TopEdge>
          <svg width="600" height="3" shapeRendering="crispEdges" aria-hidden="true">
            <path d="M144 0h1v3h-1zM585 0h1v3h-1zM387 0h1v1h-1v1h-2v-1h1z" fill="#a0521c" />
            <path d="M145 0h1v3h-1zM586 0h1v3h-1z" fill="#5a8cc8" />
          </svg>
        </TopEdge>
        <Toolbars>
          <ToolRow>
            <Group>
              <Tools list="file v open save reload print | cut copy paste undo redo | add v find tree modelM" />
            </Group>
            <Spacer />
            <Group>
              <Tools list="xLeft xRight [coverPage] xBrush" />
            </Group>
            <Group>
              <Tools list="stack question grid cart pageX" />
            </Group>
            <Group>
              <Tools list="[link] up left rightDim | pageUp" />
              <TimeInput
                aria-label="Run length"
                value={runLength}
                onChange={(e) => setRunLength(e.target.value)}
              />
              <Spinner>
                <SpinButton type="button" aria-label="Increase">
                  <svg width="7" height="4"><path d="M0 4h7L3.500 0z" /></svg>
                </SpinButton>
                <SpinButton type="button" aria-label="Decrease">
                  <svg width="7" height="4"><path d="M0 0h7L3.500 4z" /></svg>
                </SpinButton>
              </Spinner>
              <Tools list="pageDown pageBoth pageDouble pageX stop | [hatchPage] [hatchPage] hand" />
            </Group>
            <Group>
              <Tools list="stepIn stepOver stepOut | stepInP stepOverP stepOutP" />
            </Group>
          </ToolRow>
          <ToolRow>
            <Group>
              <FieldLabel htmlFor="layout">Layout</FieldLabel>
              <LayoutSelect id="layout" defaultValue="Simulate">
                <option>Simulate</option>
              </LayoutSelect>
              <Drop label="Open layouts" />
            </Group>
          </ToolRow>
          <ToolRow>
            <Group>
              <FieldLabel htmlFor="columns" $dim>ColumnLayout</FieldLabel>
              <LayoutSelect id="columns" $wide disabled defaultValue="AllColumns">
                <option>AllColumns</option>
              </LayoutSelect>
              <Drop dim label="Open column layouts" />
            </Group>
            <Group>
              <Tools list="flagAdd v flagDel v flagEdit flagSave v flagGo" />
            </Group>
            <Group>
              <Tools list="(fI) (fO) (fIO) (fBox) [fAll] brush" />
            </Group>
            <Group>
              <Tools list="(cursor) [region] [pan] [bars] [ranges] | light" />
            </Group>
            <Group>
              <Tools list="pinAdd pinDim edgeL edgeR fallL fallR riseL riseR" />
            </Group>
          </ToolRow>
          <ToolRow>
            <Group>
              <Tools list="mergeIn v mergeOut v net |" />
              <FieldLabel htmlFor="search">Search:</FieldLabel>
              <SearchInput id="search" value={search} onChange={(e) => setSearch(e.target.value)} />
              <Drop label="Search history" />
              <Tool icon="findPrev" narrow />
              <Tool icon="findNext" narrow />
              <Tool icon="findOpts" />
            </Group>
            <Group>
              <Tools list="zoomIn zoomOut zoomFull zoomPin zoomPins zoomArea" />
            </Group>
            <Group>
              <Tools list="(line1) [bar1] [bar2] | fillBlue edgeFill edgeDots edgeYellow" />
            </Group>
          </ToolRow>
        </Toolbars>

        <WaveWindow>
          <TitleBar>
            <svg width="15" height="16" shapeRendering="crispEdges" aria-hidden="true">
              <path d="M0 0h15v16H0z" fill="#111" />
              <path d="M1 1h13v4H1z" fill="#f0f0f0" />
              <path d="M1 8.500h3v4h3v-4M8 12.500h2v-4h4M9 6.500h5" fill="none" stroke="#20c060" />
              <path d="M7 14.500h6" stroke="#5030c0" />
            </svg>
            <Title>Wave - Default</Title>
            <Grooves />
            <Grip width="20" height="9" shapeRendering="crispEdges" aria-hidden="true">
              <path d="M0 1.500h20M0 5.500h20" stroke="#fff" strokeDasharray="2 2" />
              <path d="M2 3.500h18M2 7.500h18" stroke="#333" strokeDasharray="1 3" />
            </Grip>
            <Grooves />
            <WindowButton type="button" aria-label="Minimize">
              <svg width="8" height="3"><path d="M0 0h8v2H0z" /></svg>
            </WindowButton>
            <WindowButton type="button" aria-label="Undock">
              <svg width="8" height="8"><path d="M1.500 3.500h4v4h-4zM4 .5h4" fill="none" stroke="#000" /></svg>
            </WindowButton>
          </TitleBar>
          <Panes>
            <Pane $w={161}>
              <PaneHead>
                <svg width="18" height="16" viewBox="0 0 18 16" aria-hidden="true">
                  <path d="M7 0l6 3-3 5-7-4z" fill="#c822d8" />
                  <path d="M10 7l7-3v9h-7z" fill="#22a860" />
                  <circle cx="11" cy="6" r="3.500" fill="#28d8f4" />
                  <path d="M6 5l5 5-5 6-5-6z" fill="#1044e8" />
                </svg>
              </PaneHead>
              <PaneBody $gutter>
                {signals.map((s) => (
                  <SignalRow key={s.name} $selected={s.selected}>
                    {s.bus && (
                      <Expander type="button" aria-label="Expand">
                        <svg width="8" height="8"><path d="M1 4h6M4 1v6" stroke="#000" /></svg>
                      </Expander>
                    )}
                    <Branch $line={s.bus} />
                    <Diamond port={s.port} />
                    <SignalName>{s.name}</SignalName>
                  </SignalRow>
                ))}
              </PaneBody>
            </Pane>
            <Pane $w={103}>
              <PaneHead $right>Msgs</PaneHead>
              <PaneBody>
                {signals.map((s) => (
                  <SignalRow key={s.name} $value $selected={s.selected}>
                    {s.value}
                  </SignalRow>
                ))}
              </PaneBody>
            </Pane>
            <WavePane>
              <PaneHead />
              <WaveArea>
                <Waves />
              </WaveArea>
            </WavePane>
          </Panes>
        </WaveWindow>
      </Main>
    </Page>
  );
};

export default App;
